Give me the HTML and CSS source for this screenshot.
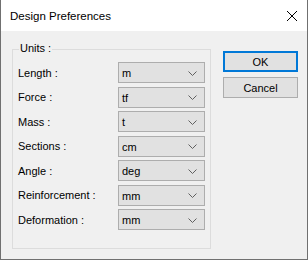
FILE: index.html
```html
<!DOCTYPE html>
<html lang="en">
<head>
  <meta charset="UTF-8" />
  <title>Design Preferences</title>
  <link rel="stylesheet" href="styles.css">
</head>
<body>

<div class="window">
  <!-- Title Bar -->
  <div class="title-bar">
    <span class="title">Design Preferences</span>
    <svg class="close" width="10" height="10" viewBox="0 0 10 10">
      <path d="M0 0 L10 10 M10 0 L0 10" stroke="#000" stroke-width="1" fill="none" />
    </svg>
  </div>

  <!-- Dialog Body -->
  <div class="dialog-body">
    <div class="group">
      <span class="group-label">Units :</span>

      <div class="row">
        <span class="label">Length :</span>
        <div class="combo"><span>m</span><svg width="9" height="5" viewBox="0 0 9 5"><path d="M0.5 0.5 L4.5 4.5 L8.5 0.5" /></svg></div>
      </div>
      <div class="row">
        <span class="label">Force :</span>
        <div class="combo"><span>tf</span><svg width="9" height="5" viewBox="0 0 9 5"><path d="M0.5 0.5 L4.5 4.5 L8.5 0.5" /></svg></div>
      </div>
      <div class="row">
        <span class="label">Mass :</span>
        <div class="combo"><span>t</span><svg width="9" height="5" viewBox="0 0 9 5"><path d="M0.5 0.5 L4.5 4.5 L8.5 0.5" /></svg></div>
      </div>
      <div class="row">
        <span class="label">Sections :</span>
        <div class="combo"><span>cm</span><svg width="9" height="5" viewBox="0 0 9 5"><path d="M0.5 0.5 L4.5 4.5 L8.5 0.5" /></svg></div>
      </div>
      <div class="row">
        <span class="label">Angle :</span>
        <div class="combo"><span>deg</span><svg width="9" height="5" viewBox="0 0 9 5"><path d="M0.5 0.5 L4.5 4.5 L8.5 0.5" /></svg></div>
      </div>
      <div class="row">
        <span class="label">Reinforcement :</span>
        <div class="combo"><span>mm</span><svg width="9" height="5" viewBox="0 0 9 5"><path d="M0.5 0.5 L4.5 4.5 L8.5 0.5" /></svg></div>
      </div>
      <div class="row">
        <span class="label">Deformation :</span>
        <div class="combo"><span>mm</span><svg width="9" height="5" viewBox="0 0 9 5"><path d="M0.5 0.5 L4.5 4.5 L8.5 0.5" /></svg></div>
      </div>
    </div>

    <div class="buttons">
      <button class="btn default">OK</button>
      <button class="btn">Cancel</button>
    </div>
  </div>
</div>

</body>
</html>
```

FILE: styles.css
```css
/* General */
body {
  margin: 0;
  padding: 0;
  font-family: "Liberation Sans", Arial, sans-serif;
  font-size: 11px;
  color: #000;
  background: #f0f0f0;
}

.window {
  width: 308px;
  height: 260px;
  box-sizing: border-box;
  border: 1px solid #707070;
  border-top: none;
  display: flex;
  flex-direction: column;
  background: #f0f0f0;
}

/* Title Bar */
.title-bar {
  height: 31px;
  flex: none;
  display: flex;
  align-items: center;
  justify-content: space-between;
  background: #fff;
  padding: 0 10px 0 9px;
}

.title {
  font-size: 11.5px;
}

.close {
  display: block;
}

/* Dialog Body */
.dialog-body {
  flex: 1;
  display: flex;
  align-items: flex-start;
  padding: 0 9px 0 11px;
}

.group {
  position: relative;
  width: 199px;
  height: 200px;
  box-sizing: border-box;
  margin-top: 18px;
  border: 1px solid #dcdcdc;
  padding: 12px 5px 0 5px;
  display: flex;
  flex-direction: column;
  gap: 3.5px;
}

.group-label {
  position: absolute;
  top: -8px;
  left: 6px;
  padding: 0 1px;
  background: #f0f0f0;
}

.row {
  display: flex;
  align-items: center;
  height: 21px;
}

.label {
  width: 100px;
  flex: none;
}

.combo {
  width: 87px;
  height: 21px;
  box-sizing: border-box;
  border: 1px solid #adadad;
  background: #e1e1e1;
  display: flex;
  align-items: center;
  justify-content: space-between;
  padding: 1px 7px 0 3px;
}

.combo svg {
  display: block;
  fill: none;
  stroke: #606060;
  stroke-width: 1;
}

/* Buttons */
.buttons {
  margin-left: 12px;
  margin-top: 20px;
  display: flex;
  flex-direction: column;
  gap: 5px;
}

.btn {
  width: 75px;
  height: 21px;
  box-sizing: border-box;
  border: 1px solid #adadad;
  background: #e1e1e1;
  font-family: "Liberation Sans", Arial, sans-serif;
  font-size: 11px;
  color: #000;
  padding: 0;
  border-radius: 0;
}

.btn.default {
  border: 2px solid #0078d7;
}
```
